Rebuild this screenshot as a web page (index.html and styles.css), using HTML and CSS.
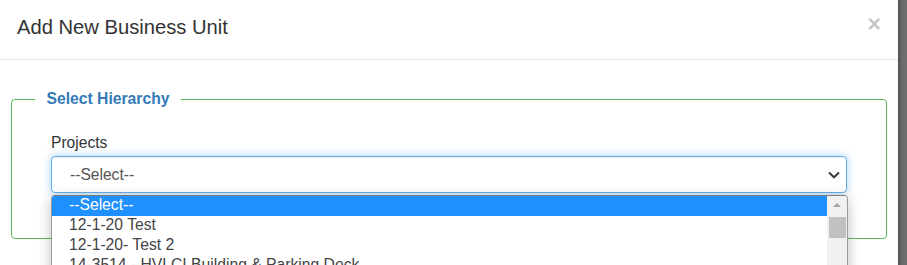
FILE: index.html
```html
<!DOCTYPE html>
<html lang="en">
<head>
<meta charset="utf-8">
<title>Add New Business Unit</title>
<link rel="stylesheet" href="styles.css">
</head>
<body>
<div class="screen">
  <div class="modal">
    <div class="modal-header">
      <h4 class="modal-title">Add New Business Unit</h4>
      <span class="close">&times;</span>
    </div>
    <div class="modal-body">
      <fieldset class="hierarchy">
        <legend class="hierarchy-legend">Select Hierarchy</legend>
        <label class="field-label">Projects</label>
        <div class="select-wrap">
          <div class="select">
            <span class="select-value">--Select--</span>
            <svg class="chevron" width="12" height="8" viewBox="0 0 12 8"><polyline points="1,1.5 6,6.3 11,1.5" fill="none" stroke="#3a3a3a" stroke-width="2"/></svg>
          </div>
          <div class="dropdown">
            <ul class="options">
              <li class="option selected">--Select--</li>
              <li class="option">12-1-20 Test</li>
              <li class="option">12-1-20- Test 2</li>
              <li class="option">14-3514 - HVLCI Building &amp; Parking Deck</li>
            </ul>
            <div class="scrollbar">
              <div class="scroll-arrow"></div>
              <div class="scroll-thumb"></div>
            </div>
          </div>
        </div>
      </fieldset>
    </div>
  </div>
  <div class="backdrop"></div>
</div>
</body>
</html>
```
FILE: styles.css
```css
html, body {
  margin: 0;
  padding: 0;
  background: #fff;
}
body {
  font-family: "Liberation Sans", Arial, sans-serif;
  color: #333;
}
.screen {
  display: flex;
  width: 907px;
  height: 265px;
  overflow: hidden;
}
.modal {
  width: 898px;
  flex: none;
  background: #fff;
}
.backdrop {
  flex: 1;
  background: linear-gradient(to right, #4f4f4f, #696969 40%, #6e6e6e);
}
.modal-header {
  display: flex;
  justify-content: space-between;
  align-items: flex-start;
  padding: 13px 17px 18px 17px;
  border-bottom: 1px solid #e5e5e5;
}
.modal-title {
  margin: 0;
  font-size: 20.2px;
  line-height: 28px;
  font-weight: normal;
  color: #333;
}
.close {
  font-size: 23px;
  font-weight: bold;
  line-height: 1;
  color: #000;
  opacity: 0.22;
}
.modal-body {
  padding: 28px 11px 0 11px;
}
.hierarchy {
  margin: 0;
  border: 1px solid #5cb85c;
  border-radius: 4px;
  padding: 0 39px 45px 39px;
}
.hierarchy-legend {
  margin-left: -16px;
  padding: 0 11.5px;
  font-size: 15.7px;
  line-height: 22px;
  font-weight: bold;
  color: #337ab7;
}
.field-label {
  display: block;
  margin-top: 22px;
  margin-bottom: 2px;
  font-size: 15.6px;
  line-height: 22px;
  color: #333;
}
.select-wrap {
  position: relative;
}
.select {
  box-sizing: border-box;
  height: 37px;
  display: flex;
  align-items: center;
  justify-content: space-between;
  padding: 0 6px 0 18px;
  border: 1px solid #66afe9;
  border-radius: 4px;
  background: #fff;
  box-shadow: inset 0 1px 1px rgba(0,0,0,.075), 0 0 8px rgba(102,175,233,.6);
}
.select-value {
  font-size: 15.6px;
  color: #555;
}
.chevron {
  display: block;
}
.dropdown {
  position: absolute;
  z-index: 2;
  top: 39px;
  left: 0;
  width: 797px;
  height: 110px;
  box-sizing: border-box;
  display: flex;
  background: #fff;
  border: 1px solid #9a9a9a;
  border-top-color: #7a7a7a;
  border-radius: 4px 4px 0 0;
  box-shadow: 0 4px 14px rgba(0,0,0,.25);
  overflow: hidden;
}
.options {
  flex: 1;
  margin: 0;
  padding: 0;
  list-style: none;
}
.option {
  height: 20px;
  line-height: 17px;
  padding-left: 17px;
  font-size: 15.7px;
  color: #444;
  white-space: nowrap;
}
.option.selected {
  background: #1e90ff;
  color: #fff;
}
.scrollbar {
  width: 20px;
  flex: none;
  background: #f1f1f1;
  display: flex;
  flex-direction: column;
  align-items: flex-start;
}
.scroll-arrow {
  margin: 7px 0 0 6px;
  width: 0;
  height: 0;
  border-left: 4px solid transparent;
  border-right: 4px solid transparent;
  border-bottom: 4px solid #a3a3a3;
}
.scroll-thumb {
  margin: 10px 0 0 2px;
  width: 17px;
  height: 21px;
  background: #c1c1c1;
}
```
